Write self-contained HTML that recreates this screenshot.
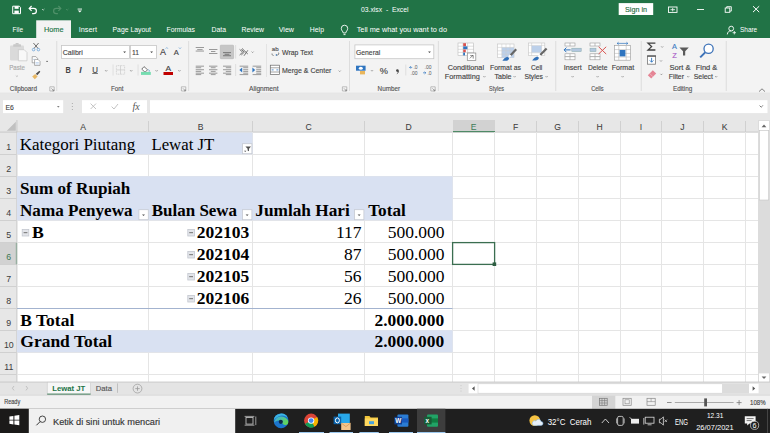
<!DOCTYPE html>
<html><head><meta charset="utf-8">
<style>
*{margin:0;padding:0}
html,body{width:770px;height:433px;overflow:hidden;background:#fff}
svg{position:absolute;left:0;top:0;display:block}
</style></head><body>
<svg width="770" height="433" viewBox="0 0 770 433">
<rect x="0" y="0" width="770" height="38" fill="#217346"/>
<path d="M12.7 6.2h6.6l1.2 1.2v6.3h-7.8z" fill="none" stroke="#fff" stroke-width="1"/>
<rect x="14.6" y="6.2" width="4" height="2.6" fill="#fff"/>
<rect x="14.4" y="10.6" width="4.4" height="3" fill="#fff"/>
<path d="M29.5 8.3h4.2a2.7 2.7 0 0 1 0 5.4h-1.6" fill="none" stroke="#fff" stroke-width="1.2"/>
<path d="M31.6 6l-2.4 2.4 2.4 2.4" fill="none" stroke="#fff" stroke-width="1.2"/>
<path d="M42 9l1.2 1.2L44.4 9" fill="none" stroke="#cfe1d6" stroke-width="0.8"/>
<path d="M60.5 8.3h-4.2a2.7 2.7 0 0 0 0 5.4h1.6" fill="none" stroke="#4f9169" stroke-width="1.2"/>
<path d="M58.4 6l2.4 2.4-2.4 2.4" fill="none" stroke="#4f9169" stroke-width="1.2"/>
<path d="M66 9l1.2 1.2L68.4 9" fill="none" stroke="#4f9169" stroke-width="0.8"/>
<rect x="77.6" y="8.6" width="4.4" height="0.9" fill="#fff"/>
<path d="M77.8 10.6h4l-2 2z" fill="#fff"/>
<text x="361" y="12.3" font-size="7.8" fill="#fff" font-weight="normal" font-family="Liberation Sans" textLength="47.5" lengthAdjust="spacingAndGlyphs">03.xlsx&#160; -&#160; Excel</text>
<rect x="618.7" y="3.1" width="34.5" height="11.9" fill="#fff"/>
<text x="625" y="12" font-size="7.8" fill="#1e6b41" stroke="#1e6b41" stroke-width="0.14" font-weight="normal" font-family="Liberation Sans" textLength="22.0" lengthAdjust="spacingAndGlyphs">Sign in</text>
<rect x="668.5" y="7" width="8.5" height="5.4" fill="none" stroke="#fff" stroke-width="0.9"/>
<path d="M670.5 9.7h4.5M672.7 8v3.4" stroke="#fff" stroke-width="0.8"/>
<rect x="697" y="9" width="7" height="0.9" fill="#fff"/>
<rect x="725.2" y="8" width="4.6" height="4.3" fill="none" stroke="#fff" stroke-width="0.9"/>
<path d="M726.7 8V6.7h4.6v4.4h-1.5" fill="none" stroke="#fff" stroke-width="0.9"/>
<path d="M753 6.2l6.2 5.9M759.2 6.2L753 12.1" stroke="#fff" stroke-width="1"/>
<rect x="36.2" y="20.3" width="34.8" height="18" fill="#f3f3f3"/>
<text x="12.5" y="32.2" font-size="8" fill="#fff" font-weight="normal" font-family="Liberation Sans" textLength="10.5" lengthAdjust="spacingAndGlyphs">File</text>
<text x="78.7" y="32.2" font-size="8" fill="#fff" font-weight="normal" font-family="Liberation Sans" textLength="18.3" lengthAdjust="spacingAndGlyphs">Insert</text>
<text x="112.5" y="32.2" font-size="8" fill="#fff" font-weight="normal" font-family="Liberation Sans" textLength="38.5" lengthAdjust="spacingAndGlyphs">Page Layout</text>
<text x="166.5" y="32.2" font-size="8" fill="#fff" font-weight="normal" font-family="Liberation Sans" textLength="28.5" lengthAdjust="spacingAndGlyphs">Formulas</text>
<text x="211.5" y="32.2" font-size="8" fill="#fff" font-weight="normal" font-family="Liberation Sans" textLength="14.5" lengthAdjust="spacingAndGlyphs">Data</text>
<text x="241.5" y="32.2" font-size="8" fill="#fff" font-weight="normal" font-family="Liberation Sans" textLength="22.5" lengthAdjust="spacingAndGlyphs">Review</text>
<text x="278.7" y="32.2" font-size="8" fill="#fff" font-weight="normal" font-family="Liberation Sans" textLength="15.3" lengthAdjust="spacingAndGlyphs">View</text>
<text x="309.8" y="32.2" font-size="8" fill="#fff" font-weight="normal" font-family="Liberation Sans" textLength="14.2" lengthAdjust="spacingAndGlyphs">Help</text>
<text x="44" y="32.2" font-size="8" fill="#217346" stroke="#217346" stroke-width="0.14" font-weight="normal" font-family="Liberation Sans" textLength="19.5" lengthAdjust="spacingAndGlyphs">Home</text>
<path d="M343.3 33c-.2-1.6-2-2.4-2-4.6a3.2 3.2 0 0 1 6.4 0c0 2.2-1.8 3-2 4.6z" fill="none" stroke="#fff" stroke-width="0.9"/>
<path d="M343.5 34.6h2" stroke="#fff" stroke-width="0.9"/>
<text x="356.7" y="32.2" font-size="8" fill="#fff" font-weight="normal" font-family="Liberation Sans" textLength="90.3" lengthAdjust="spacingAndGlyphs">Tell me what you want to do</text>
<circle cx="731.2" cy="28.6" r="2.4" fill="none" stroke="#fff" stroke-width="0.9"/>
<path d="M727.3 34.4c.3-2.6 1.8-3.6 3.9-3.6" fill="none" stroke="#fff" stroke-width="0.9"/>
<path d="M734.3 31v3.4M732.6 32.7h3.4" stroke="#fff" stroke-width="0.8"/>
<text x="740" y="32.2" font-size="8" fill="#fff" font-weight="normal" font-family="Liberation Sans" textLength="17.2" lengthAdjust="spacingAndGlyphs">Share</text>
<rect x="0" y="38.3" width="770" height="55" fill="#f3f3f3"/>
<rect x="0" y="92.8" width="770" height="0.8" fill="#d8d8d8"/>
<rect x="266.2" y="44" width="0.7" height="33" fill="#dcdcdc"/>
<rect x="56.4" y="41" width="0.8" height="50" fill="#d8d8d8"/>
<rect x="188.3" y="41" width="0.8" height="50" fill="#d8d8d8"/>
<rect x="349" y="41" width="0.8" height="50" fill="#d8d8d8"/>
<rect x="437.9" y="41" width="0.8" height="50" fill="#d8d8d8"/>
<rect x="555.4" y="41" width="0.8" height="50" fill="#d8d8d8"/>
<rect x="640.8" y="41" width="0.8" height="50" fill="#d8d8d8"/>
<rect x="725.8" y="41" width="0.8" height="50" fill="#d8d8d8"/>
<text x="9.8" y="90.5" font-size="6.8" fill="#555" stroke="#555" stroke-width="0.14" font-weight="normal" font-family="Liberation Sans" textLength="27.2" lengthAdjust="spacingAndGlyphs">Clipboard</text>
<text x="111" y="90.5" font-size="6.8" fill="#555" stroke="#555" stroke-width="0.14" font-weight="normal" font-family="Liberation Sans" textLength="12.5" lengthAdjust="spacingAndGlyphs">Font</text>
<text x="249" y="90.5" font-size="6.8" fill="#555" stroke="#555" stroke-width="0.14" font-weight="normal" font-family="Liberation Sans" textLength="29.6" lengthAdjust="spacingAndGlyphs">Alignment</text>
<text x="377.6" y="90.5" font-size="6.8" fill="#555" stroke="#555" stroke-width="0.14" font-weight="normal" font-family="Liberation Sans" textLength="22.4" lengthAdjust="spacingAndGlyphs">Number</text>
<text x="489" y="90.5" font-size="6.8" fill="#555" stroke="#555" stroke-width="0.14" font-weight="normal" font-family="Liberation Sans" textLength="15.0" lengthAdjust="spacingAndGlyphs">Styles</text>
<text x="591.2" y="90.5" font-size="6.8" fill="#555" stroke="#555" stroke-width="0.14" font-weight="normal" font-family="Liberation Sans" textLength="12.4" lengthAdjust="spacingAndGlyphs">Cells</text>
<text x="673" y="90.5" font-size="6.8" fill="#555" stroke="#555" stroke-width="0.14" font-weight="normal" font-family="Liberation Sans" textLength="19.3" lengthAdjust="spacingAndGlyphs">Editing</text>
<path d="M49.8 86.8h4.4v4.2h-4.4z" fill="none" stroke="#999" stroke-width="0.6"/><path d="M51.4 88.4l2.4 2.4M52.4 90.8h1.4v-1.4" fill="none" stroke="#777" stroke-width="0.6"/>
<path d="M181.4 86.8h4.4v4.2h-4.4z" fill="none" stroke="#999" stroke-width="0.6"/><path d="M183.0 88.4l2.4 2.4M184.0 90.8h1.4v-1.4" fill="none" stroke="#777" stroke-width="0.6"/>
<path d="M342.4 86.8h4.4v4.2h-4.4z" fill="none" stroke="#999" stroke-width="0.6"/><path d="M344.0 88.4l2.4 2.4M345.0 90.8h1.4v-1.4" fill="none" stroke="#777" stroke-width="0.6"/>
<path d="M430.8 86.8h4.4v4.2h-4.4z" fill="none" stroke="#999" stroke-width="0.6"/><path d="M432.40000000000003 88.4l2.4 2.4M433.40000000000003 90.8h1.4v-1.4" fill="none" stroke="#777" stroke-width="0.6"/>
<path d="M759 91.6l3-2.8 3 2.8" fill="none" stroke="#666" stroke-width="0.8"/>
<rect x="10" y="45.4" width="14" height="15" rx="0.8" fill="#dadada"/>
<rect x="13.2" y="44.2" width="7.8" height="2.6" rx="0.6" fill="#c8c8c8"/><rect x="15.6" y="43" width="3" height="1.6" fill="#c8c8c8"/>
<path d="M18.4 49.7h5.8l2.8 2.8v8.3h-8.6z" fill="#f8f8f8" stroke="#c6c6c6" stroke-width="0.7"/>
<text x="9.2" y="70.2" font-size="7.5" fill="#a8a8a8" stroke="#a8a8a8" stroke-width="0.14" font-weight="normal" font-family="Liberation Sans" textLength="15.7" lengthAdjust="spacingAndGlyphs">Paste</text>
<path d="M15.8 75.6l1.1 1 1.1-1" fill="none" stroke="#aaa" stroke-width="0.7"/>
<path d="M33.4 43l4.6 5.4M38.6 43L34 48.4" stroke="#505050" stroke-width="0.8"/>
<circle cx="33.6" cy="49.6" r="1.3" fill="none" stroke="#5a9ad6" stroke-width="0.7"/><circle cx="38.4" cy="49.6" r="1.3" fill="none" stroke="#5a9ad6" stroke-width="0.7"/>
<path d="M32.2 56.6h3.6l1.8 1.8v4.4h-5.4z" fill="#fff" stroke="#7a7a7a" stroke-width="0.6"/>
<path d="M34.6 59.4h3.4l2 2v4h-5.4z" fill="#fff" stroke="#7a7a7a" stroke-width="0.6"/>
<path d="M33 59.4h1.6M35.6 62.6h3.2M35.6 64h3.2" stroke="#9bbbe0" stroke-width="0.6"/>
<path d="M46.2 61.4h1.8" stroke="#555" stroke-width="0.8"/>
<path d="M32.2 76.6l3-2.6 2.4 2.4-2.8 2.8z" fill="#e8b865"/>
<path d="M35.8 73.8l3.6-3 .9.9-3 3.6z" fill="#4a4a4a"/>
<rect x="61.5" y="45.5" width="68" height="13" fill="#fff" stroke="#c6c6c6" stroke-width="0.8"/>
<rect x="130.5" y="45.5" width="26" height="13" fill="#fff" stroke="#c6c6c6" stroke-width="0.8"/>
<text x="62.8" y="55.2" font-size="7.8" fill="#444" stroke="#444" stroke-width="0.14" font-weight="normal" font-family="Liberation Sans" textLength="19.9" lengthAdjust="spacingAndGlyphs">Calibri</text>
<text x="132" y="55.2" font-size="7.8" fill="#444" stroke="#444" stroke-width="0.14" font-weight="normal" font-family="Liberation Sans" textLength="7.0" lengthAdjust="spacingAndGlyphs">11</text>
<path d="M123.19999999999999 51.6h2.8l-1.4 1.3z" fill="#444"/>
<path d="M150.2 51.6h2.8l-1.4 1.3z" fill="#444"/>
<text x="159.9" y="55" font-size="9" fill="#444" stroke="#444" stroke-width="0.14" font-weight="normal" font-family="Liberation Sans" textLength="6.0" lengthAdjust="spacingAndGlyphs">A</text>
<path d="M165.8 48.6l1-1 1 1" fill="none" stroke="#4a8fd0" stroke-width="0.7"/>
<text x="173.7" y="55" font-size="7.6" fill="#444" stroke="#444" stroke-width="0.14" font-weight="normal" font-family="Liberation Sans" textLength="5.1" lengthAdjust="spacingAndGlyphs">A</text>
<path d="M179 47.6l1 1 1-1" fill="none" stroke="#4a8fd0" stroke-width="0.7"/>
<text x="65.4" y="72.8" font-size="8.4" fill="#444" font-weight="bold" font-family="Liberation Sans" textLength="5.3" lengthAdjust="spacingAndGlyphs">B</text>
<text x="79.2" y="72.8" font-size="8.6" fill="#444" font-style="italic" font-weight="bold" font-family="Liberation Sans">I</text>
<path d="M82.4 66.6l-2 6.4" stroke="#fff" stroke-width="0"/>
<text x="92.2" y="72.6" font-size="8.2" fill="#444" stroke="#444" stroke-width="0.14" font-weight="normal" font-family="Liberation Sans" textLength="5.7" lengthAdjust="spacingAndGlyphs">U</text>
<rect x="92.2" y="73" width="5.7" height="0.7" fill="#444"/>
<path d="M105.10000000000001 70.2l1.1 1.1 1.1-1.1" fill="none" stroke="#777" stroke-width="0.7"/>
<path d="M130.1 70.2l1.1 1.1 1.1-1.1" fill="none" stroke="#777" stroke-width="0.7"/>
<path d="M155.5 70.2l1.1 1.1 1.1-1.1" fill="none" stroke="#777" stroke-width="0.7"/>
<path d="M178.3 70.2l1.1 1.1 1.1-1.1" fill="none" stroke="#777" stroke-width="0.7"/>
<rect x="112.7" y="64.5" width="0.7" height="11" fill="#d6d6d6"/>
<rect x="137.7" y="64.5" width="0.7" height="11" fill="#d6d6d6"/>
<rect x="116.4" y="65.6" width="8.2" height="8.6" fill="none" stroke="#c8c8c8" stroke-width="0.7" stroke-dasharray="1 0.6"/>
<path d="M120.5 65.6v8.6M116.4 69.9h8.2" stroke="#c8c8c8" stroke-width="0.7"/>
<path d="M144 66.6l3.6 3.2-2.6 2.4-3.2-3z" fill="#fff" stroke="#555" stroke-width="0.8"/>
<path d="M148.6 69.6c.8 1 .9 1.6.5 2" fill="none" stroke="#4a8fd0" stroke-width="0.9"/>
<rect x="141" y="71.9" width="9.8" height="3" fill="#75dcb0"/>
<text x="165.4" y="71.2" font-size="7.6" fill="#444" stroke="#444" stroke-width="0.14" font-weight="normal" font-family="Liberation Sans" textLength="5.6" lengthAdjust="spacingAndGlyphs">A</text>
<rect x="163.5" y="72" width="9.5" height="3" fill="#c00000"/>
<rect x="195.7" y="47" width="8.300000000000011" height="0.9" fill="#8f8f8f"/>
<rect x="197.2" y="49.2" width="5.400000000000006" height="0.9" fill="#8f8f8f"/>
<rect x="195.7" y="50.6" width="8.300000000000011" height="0.9" fill="#8f8f8f"/>
<rect x="209" y="49" width="8.400000000000006" height="0.9" fill="#8f8f8f"/>
<rect x="211" y="51.1" width="4.400000000000006" height="0.9" fill="#8f8f8f"/>
<rect x="209" y="53" width="8.400000000000006" height="0.9" fill="#8f8f8f"/>
<rect x="220.3" y="45.2" width="13.3" height="13.5" rx="0.6" fill="#c6c6c6" stroke="#b4b4b4" stroke-width="0.6"/>
<rect x="223" y="52.2" width="8" height="0.9" fill="#6e6e6e"/>
<rect x="224.6" y="53.8" width="4.800000000000011" height="0.9" fill="#6e6e6e"/>
<rect x="223" y="55.3" width="8" height="0.9" fill="#6e6e6e"/>
<rect x="195.7" y="65.7" width="8.300000000000011" height="0.9" fill="#8f8f8f"/>
<rect x="209" y="65.7" width="8.400000000000006" height="0.9" fill="#8f8f8f"/>
<rect x="223" y="65.7" width="8.199999999999989" height="0.9" fill="#8f8f8f"/>
<rect x="239.6" y="65.7" width="8.599999999999994" height="0.9" fill="#8f8f8f"/>
<rect x="252.6" y="65.7" width="8.599999999999994" height="0.9" fill="#8f8f8f"/>
<rect x="195.7" y="67.3" width="5.5" height="0.9" fill="#8f8f8f"/>
<rect x="210.8" y="67.3" width="4.799999999999983" height="0.9" fill="#8f8f8f"/>
<rect x="225.8" y="67.3" width="5.399999999999977" height="0.9" fill="#8f8f8f"/>
<rect x="243.2" y="67.3" width="5.0" height="0.9" fill="#8f8f8f"/>
<rect x="256.2" y="67.3" width="5.0" height="0.9" fill="#8f8f8f"/>
<rect x="195.7" y="69.3" width="8.300000000000011" height="0.9" fill="#8f8f8f"/>
<rect x="209" y="69.3" width="8.400000000000006" height="0.9" fill="#8f8f8f"/>
<rect x="223" y="69.3" width="8.199999999999989" height="0.9" fill="#8f8f8f"/>
<rect x="243.2" y="69.3" width="5.0" height="0.9" fill="#8f8f8f"/>
<rect x="256.2" y="69.3" width="5.0" height="0.9" fill="#8f8f8f"/>
<rect x="195.7" y="70.9" width="5.5" height="0.9" fill="#8f8f8f"/>
<rect x="210.8" y="70.9" width="4.799999999999983" height="0.9" fill="#8f8f8f"/>
<rect x="225.8" y="70.9" width="5.399999999999977" height="0.9" fill="#8f8f8f"/>
<rect x="243.2" y="70.9" width="5.0" height="0.9" fill="#8f8f8f"/>
<rect x="256.2" y="70.9" width="5.0" height="0.9" fill="#8f8f8f"/>
<rect x="195.7" y="72.7" width="8.300000000000011" height="0.9" fill="#8f8f8f"/>
<rect x="209" y="72.7" width="8.400000000000006" height="0.9" fill="#8f8f8f"/>
<rect x="223" y="72.7" width="8.199999999999989" height="0.9" fill="#8f8f8f"/>
<rect x="243.2" y="72.7" width="5.0" height="0.9" fill="#8f8f8f"/>
<rect x="256.2" y="72.7" width="5.0" height="0.9" fill="#8f8f8f"/>
<rect x="195.7" y="74.2" width="5.5" height="0.9" fill="#8f8f8f"/>
<rect x="210.8" y="74.2" width="4.799999999999983" height="0.9" fill="#8f8f8f"/>
<rect x="225.8" y="74.2" width="5.399999999999977" height="0.9" fill="#8f8f8f"/>
<rect x="239.6" y="74.2" width="8.599999999999994" height="0.9" fill="#8f8f8f"/>
<rect x="252.6" y="74.2" width="8.599999999999994" height="0.9" fill="#8f8f8f"/>
<path d="M239.6 49.4l3 2.8-3 2.8M241.3 49.4l3 2.8-3 2.8M242 48.4l5.8 5.6M247.8 50.3l-3.8 5.5" fill="none" stroke="#555" stroke-width="0.8"/>
<path d="M251.6 51.6l1 1 1-1" fill="none" stroke="#777" stroke-width="0.7"/>
<rect x="235.4" y="45" width="0.7" height="13.6" fill="#d6d6d6"/>
<rect x="235.4" y="64" width="0.7" height="12" fill="#d6d6d6"/>
<path d="M242.2 67.4l-2.8 2.5 2.8 2.5z" fill="#2f75c0"/><path d="M252.4 67.4l2.8 2.5-2.8 2.5z" fill="#2f75c0"/>
<text x="271.8" y="51" font-size="5" fill="#555" stroke="#555" stroke-width="0.14" font-weight="normal" font-family="Liberation Sans" textLength="6.8" lengthAdjust="spacingAndGlyphs">ab</text>
<path d="M272 53.5c0 1.5.6 2 1.6 2M278 52.6c.6 0 .8.6.8 1.1s-.4 1.3-1.2 1.3h-1.6" fill="none" stroke="#555" stroke-width="0.7"/><path d="M276.8 54l-1 1 1 1" fill="none" stroke="#2f75c0" stroke-width="0.7"/>
<text x="282" y="54.8" font-size="7.6" fill="#444" stroke="#444" stroke-width="0.14" font-weight="normal" font-family="Liberation Sans" textLength="30.9" lengthAdjust="spacingAndGlyphs">Wrap Text</text>
<rect x="270.3" y="65.2" width="9.2" height="9.4" fill="#fff" stroke="#666" stroke-width="0.7"/>
<path d="M270.3 67.8h9.2M270.3 72h9.2" stroke="#666" stroke-width="0.6"/><path d="M271.6 69.9h2M276.4 69.9h2" stroke="#2f75c0" stroke-width="0.8"/>
<text x="282" y="73.4" font-size="7.6" fill="#444" stroke="#444" stroke-width="0.14" font-weight="normal" font-family="Liberation Sans" textLength="49.4" lengthAdjust="spacingAndGlyphs">Merge &amp; Center</text>
<path d="M338.7 70.6l1 1 1-1" fill="none" stroke="#777" stroke-width="0.7"/>
<rect x="354.9" y="44.9" width="78.9" height="13.8" fill="#fff" stroke="#c6c6c6" stroke-width="0.8"/>
<text x="356" y="55.2" font-size="7.8" fill="#444" stroke="#444" stroke-width="0.14" font-weight="normal" font-family="Liberation Sans" textLength="24.2" lengthAdjust="spacingAndGlyphs">General</text>
<path d="M428.1 51.6h2.8l-1.4 1.3z" fill="#444"/>
<rect x="356" y="65.7" width="9.6" height="5" fill="#2f75c0"/><ellipse cx="360.8" cy="68.2" rx="2" ry="1.5" fill="#fff"/>
<rect x="360" y="71" width="5" height="3.4" fill="#e9b65c"/>
<path d="M371 70.2l1 1 1-1" fill="none" stroke="#777" stroke-width="0.7"/>
<text x="379.8" y="74" font-size="9" fill="#444" stroke="#444" stroke-width="0.14" font-weight="normal" font-family="Liberation Sans" textLength="8.2" lengthAdjust="spacingAndGlyphs">%</text>
<circle cx="397.4" cy="70.6" r="1.3" fill="#444"/><path d="M398.5 70.8c0 1.4-.6 2.4-1.6 3" fill="none" stroke="#444" stroke-width="0.9"/>
<rect x="405.5" y="64.5" width="0.7" height="11" fill="#d6d6d6"/>
<text x="413.4" y="69.4" font-size="5" fill="#555" font-family="Liberation Sans">.0</text>
<text x="410.6" y="74.8" font-size="5" fill="#555" font-family="Liberation Sans">.00</text>
<path d="M409.6 67.4h2.6M410.8 66.2l-1.2 1.2 1.2 1.2" fill="none" stroke="#2f75c0" stroke-width="0.7"/>
<text x="424.6" y="69.4" font-size="5" fill="#555" font-family="Liberation Sans">.00</text>
<text x="427.4" y="74.8" font-size="5" fill="#555" font-family="Liberation Sans">.0</text>
<path d="M423 72.8h2.8M424.6 71.6l1.2 1.2-1.2 1.2" fill="none" stroke="#2f75c0" stroke-width="0.7"/>
<rect x="458" y="43" width="15.6" height="12.6" fill="#fff" stroke="#bcbcbc" stroke-width="0.6"/>
<path d="M458 46.2h15.6M458 49.3h15.6M458 52.4h15.6M463 43v12.6M467.6 43v12.6" stroke="#bcbcbc" stroke-width="0.5"/>
<rect x="463.2" y="43.2" width="2.8" height="3" fill="#d9534f"/><rect x="463.2" y="46.4" width="4.2" height="2.8" fill="#2f75c0"/><rect x="463.2" y="49.5" width="2.6" height="2.8" fill="#d9534f"/><rect x="463.2" y="52.6" width="1.8" height="2.8" fill="#2f75c0"/>
<rect x="467.3" y="53" width="8.5" height="7.4" fill="#fff" stroke="#888" stroke-width="0.7"/>
<path d="M469.8 58.4l3.4-3.4M470.2 55.6h3v3" fill="none" stroke="#444" stroke-width="0.6"/>
<text x="447.8" y="69.7" font-size="7.5" fill="#444" stroke="#444" stroke-width="0.14" font-weight="normal" font-family="Liberation Sans" textLength="36.2" lengthAdjust="spacingAndGlyphs">Conditional</text>
<text x="444.8" y="79.1" font-size="7.5" fill="#444" stroke="#444" stroke-width="0.14" font-weight="normal" font-family="Liberation Sans" textLength="35.0" lengthAdjust="spacingAndGlyphs">Formatting</text>
<rect x="497.4" y="44" width="16.6" height="13.6" fill="#fff" stroke="#c4c4c4" stroke-width="0.6"/>
<rect x="501.8" y="47.4" width="12.2" height="10.2" fill="#bcd0ea"/>
<path d="M497.4 47.4h16.6M497.4 50.8h16.6M497.4 54.2h16.6M501.8 44v13.6M506 44v13.6M510 44v13.6" stroke="#c8c8c8" stroke-width="0.5"/>
<path d="M516.2 49.2l-5.6 6" stroke="#666" stroke-width="2.2"/><path d="M510.6 55.2l-1.6 1.8" stroke="#fff" stroke-width="2"/>
<path d="M502.4 60.8c1.2-1.8 2.6-3.4 5-4l1.8 1.4c-.6 1.8-1.8 2.6-3.2 2.6z" fill="#2f6fb8"/>
<text x="490" y="69.7" font-size="7.5" fill="#444" stroke="#444" stroke-width="0.14" font-weight="normal" font-family="Liberation Sans" textLength="31.0" lengthAdjust="spacingAndGlyphs">Format as</text>
<text x="494.5" y="79.1" font-size="7.5" fill="#444" stroke="#444" stroke-width="0.14" font-weight="normal" font-family="Liberation Sans" textLength="17.0" lengthAdjust="spacingAndGlyphs">Table</text>
<rect x="528.4" y="43" width="16.4" height="12.6" fill="#fff" stroke="#c4c4c4" stroke-width="0.6"/>
<rect x="531.6" y="45.6" width="10" height="7" fill="#bcd0ea"/>
<path d="M528.4 45.4h16.4M528.4 52.8h16.4M531.6 43v12.6M541.6 43v12.6" stroke="#c8c8c8" stroke-width="0.5"/>
<path d="M546.6 48.4l-6.4 6.6" stroke="#666" stroke-width="2.2"/><path d="M540.2 55l-1.6 1.8" stroke="#fff" stroke-width="2"/>
<path d="M532.2 60.4c1.2-1.8 2.6-3.4 5-4l1.8 1.4c-.6 1.8-1.8 2.6-3.2 2.6z" fill="#2f6fb8"/>
<text x="531" y="69.7" font-size="7.5" fill="#444" stroke="#444" stroke-width="0.14" font-weight="normal" font-family="Liberation Sans" textLength="11.3" lengthAdjust="spacingAndGlyphs">Cell</text>
<text x="524.4" y="79.1" font-size="7.5" fill="#444" stroke="#444" stroke-width="0.14" font-weight="normal" font-family="Liberation Sans" textLength="18.6" lengthAdjust="spacingAndGlyphs">Styles</text>
<path d="M483.4 76.2l1 1 1-1" fill="none" stroke="#777" stroke-width="0.7"/>
<path d="M513.6 76.2l1 1 1-1" fill="none" stroke="#777" stroke-width="0.7"/>
<path d="M545.6 76.2l1 1 1-1" fill="none" stroke="#777" stroke-width="0.7"/>
<path d="M571.6 76.2l1 1 1-1" fill="none" stroke="#777" stroke-width="0.7"/>
<path d="M596.6 76.2l1 1 1-1" fill="none" stroke="#777" stroke-width="0.7"/>
<path d="M621.6 76.2l1 1 1-1" fill="none" stroke="#777" stroke-width="0.7"/>
<path d="M687.2 76.2l1 1 1-1" fill="none" stroke="#777" stroke-width="0.7"/>
<path d="M715.2 76.2l1 1 1-1" fill="none" stroke="#777" stroke-width="0.7"/>
<rect x="565" y="43" width="10" height="3" fill="#fff" stroke="#999" stroke-width="0.6"/><path d="M570 43v3" stroke="#999" stroke-width="0.6"/>
<rect x="565" y="53.8" width="10" height="3" fill="#fff" stroke="#999" stroke-width="0.6"/><path d="M570 53.8v3" stroke="#999" stroke-width="0.6"/>
<rect x="565" y="56.8" width="10" height="3" fill="#fff" stroke="#999" stroke-width="0.6"/><path d="M570 56.8v3" stroke="#999" stroke-width="0.6"/>
<rect x="571.8" y="48.2" width="9.4" height="3.4" fill="#b3c7e0" stroke="#8aa" stroke-width="0.5"/>
<path d="M564 49.9h6.6M566.4 47.6l-2.3 2.3 2.3 2.3" fill="none" stroke="#2f75c0" stroke-width="1"/>
<text x="563.7" y="69.7" font-size="7.5" fill="#444" stroke="#444" stroke-width="0.14" font-weight="normal" font-family="Liberation Sans" textLength="18.1" lengthAdjust="spacingAndGlyphs">Insert</text>
<rect x="590" y="43" width="10" height="3" fill="#fff" stroke="#999" stroke-width="0.6"/><path d="M595 43v3" stroke="#999" stroke-width="0.6"/>
<rect x="590" y="53.8" width="10" height="3" fill="#fff" stroke="#999" stroke-width="0.6"/><path d="M595 53.8v3" stroke="#999" stroke-width="0.6"/>
<rect x="590" y="56.8" width="10" height="3" fill="#fff" stroke="#999" stroke-width="0.6"/><path d="M595 56.8v3" stroke="#999" stroke-width="0.6"/>
<rect x="590" y="48.2" width="6" height="3.4" fill="#b3c7e0" stroke="#8aa" stroke-width="0.5"/>
<path d="M598.6 46.8l7.6 7.2M606.2 46.8l-7.6 7.2" stroke="#d9534f" stroke-width="1"/>
<text x="588" y="69.7" font-size="7.5" fill="#444" stroke="#444" stroke-width="0.14" font-weight="normal" font-family="Liberation Sans" textLength="19.4" lengthAdjust="spacingAndGlyphs">Delete</text>
<rect x="614.4" y="45.6" width="16.2" height="14.6" fill="#fff" stroke="#999" stroke-width="0.6"/>
<path d="M614.4 49.6h16.2M614.4 53.4h16.2M614.4 57h16.2M618.8 45.6v14.6M626.2 45.6v14.6" stroke="#aaa" stroke-width="0.5"/>
<rect x="619.6" y="50" width="5.8" height="6.4" fill="#2f75c0"/>
<path d="M617 43.4h11M618.6 42.2l-1.4 1.2 1.4 1.2M626.4 42.2l1.4 1.2-1.4 1.2" fill="none" stroke="#2f75c0" stroke-width="0.7"/>
<text x="611.7" y="69.7" font-size="7.5" fill="#444" stroke="#444" stroke-width="0.14" font-weight="normal" font-family="Liberation Sans" textLength="22.5" lengthAdjust="spacingAndGlyphs">Format</text>
<path d="M655.4 43.2h-7.4l3.6 3.4-3.6 3.4h7.4" fill="none" stroke="#404040" stroke-width="1.3"/>
<path d="M661.2 46.4l1 1 1-1" fill="none" stroke="#777" stroke-width="0.7"/>
<rect x="647.6" y="56" width="8" height="8.2" fill="#fff" stroke="#777" stroke-width="0.8"/><rect x="647.2" y="55.4" width="8.8" height="1.3" fill="#555"/>
<path d="M651.6 57.8v4.4M649.8 60.4l1.8 1.8 1.8-1.8" fill="none" stroke="#2f75c0" stroke-width="0.9"/>
<path d="M660 60.4l1 1 1-1" fill="none" stroke="#777" stroke-width="0.7"/>
<path d="M647.8 75.2l5-5 3.4 3.4-5 5z" fill="#e58595"/><path d="M649.6 73.4l3.4 3.4" stroke="#f4c0c8" stroke-width="0.7"/>
<path d="M660.4 73.8l1 1 1-1" fill="none" stroke="#777" stroke-width="0.7"/>
<text x="671.9" y="49.2" font-size="7.8" fill="#3e7cc4" stroke="#3e7cc4" stroke-width="0.14" font-weight="normal" font-family="Liberation Sans" textLength="4.9" lengthAdjust="spacingAndGlyphs">A</text>
<text x="672.2" y="57.8" font-size="7.8" fill="#a95cc8" stroke="#a95cc8" stroke-width="0.14" font-weight="normal" font-family="Liberation Sans" textLength="4.6" lengthAdjust="spacingAndGlyphs">Z</text>
<path d="M679.4 47.4h9.4l-3.6 3.8v4.4h-2.2v-4.4z" fill="#5a5a5a"/>
<text x="669.5" y="69.7" font-size="7.5" fill="#444" stroke="#444" stroke-width="0.14" font-weight="normal" font-family="Liberation Sans" textLength="21.1" lengthAdjust="spacingAndGlyphs">Sort &amp;</text>
<text x="668.7" y="79.1" font-size="7.5" fill="#444" stroke="#444" stroke-width="0.14" font-weight="normal" font-family="Liberation Sans" textLength="15.3" lengthAdjust="spacingAndGlyphs">Filter</text>
<circle cx="708.6" cy="48.8" r="4.6" fill="#fff" stroke="#3d72b8" stroke-width="1.3"/>
<path d="M705.2 52.4l-5 5" stroke="#3d72b8" stroke-width="2"/>
<text x="695.7" y="69.7" font-size="7.5" fill="#444" stroke="#444" stroke-width="0.14" font-weight="normal" font-family="Liberation Sans" textLength="21.6" lengthAdjust="spacingAndGlyphs">Find &amp;</text>
<text x="693.7" y="79.1" font-size="7.5" fill="#444" stroke="#444" stroke-width="0.14" font-weight="normal" font-family="Liberation Sans" textLength="19.3" lengthAdjust="spacingAndGlyphs">Select</text>
<rect x="0" y="93.6" width="770" height="26.4" fill="#e7e7e7"/>
<rect x="3" y="100.2" width="60.2" height="13.1" fill="#fff"/>
<text x="5.5" y="109.6" font-size="7.6" fill="#444" stroke="#444" stroke-width="0.14" font-weight="normal" font-family="Liberation Sans" textLength="8.3" lengthAdjust="spacingAndGlyphs">E6</text>
<path d="M57 106.2h2.6l-1.3 1.2z" fill="#555"/>
<circle cx="72.3" cy="103.4" r="0.5" fill="#999"/><circle cx="72.3" cy="106.4" r="0.5" fill="#999"/><circle cx="72.3" cy="109.4" r="0.5" fill="#999"/>
<rect x="82" y="100.2" width="65" height="13.1" fill="#fff"/>
<path d="M90.6 103.6l5.4 5.4M96 103.6l-5.4 5.4" stroke="#b4b4b4" stroke-width="0.8"/>
<path d="M111.6 106.6l2.4 2.4 4-5" fill="none" stroke="#b4b4b4" stroke-width="0.8"/>
<text x="132.6" y="110.2" font-size="10" font-style="italic" font-family="Liberation Serif" fill="#555">fx</text>
<rect x="150" y="100.2" width="617.5" height="13.1" fill="#fff"/>
<path d="M759.6 105.6l1.6 1.6 1.6-1.6" fill="none" stroke="#555" stroke-width="0.8"/>
<rect x="0" y="113.3" width="770" height="18.7" fill="#e7e7e7"/>
<rect x="17" y="132" width="741" height="250" fill="#fff"/>
<rect x="0" y="132" width="17" height="250" fill="#e7e7e7"/>
<rect x="453" y="120" width="42" height="11.6" fill="#d2d2d2"/>
<rect x="453" y="131" width="42" height="1.1" fill="#4f8a66"/>
<rect x="0" y="242.6" width="16.4" height="22" fill="#d2d2d2"/>
<rect x="15.9" y="242.6" width="1.2" height="22" fill="#4f8a66"/>
<rect x="148" y="121" width="1" height="11" fill="#d0d0d0"/>
<rect x="252" y="121" width="1" height="11" fill="#d0d0d0"/>
<rect x="364" y="121" width="1" height="11" fill="#d0d0d0"/>
<rect x="536" y="121" width="1" height="11" fill="#d0d0d0"/>
<rect x="578" y="121" width="1" height="11" fill="#d0d0d0"/>
<rect x="620" y="121" width="1" height="11" fill="#d0d0d0"/>
<rect x="661" y="121" width="1" height="11" fill="#d0d0d0"/>
<rect x="703" y="121" width="1" height="11" fill="#d0d0d0"/>
<rect x="745" y="121" width="1" height="11" fill="#d0d0d0"/>
<rect x="0" y="131.6" width="758" height="1" fill="#c8c8c8"/>
<rect x="453" y="131" width="42" height="1.1" fill="#4f8a66"/>
<path d="M6.8 130.7h9V121.7z" fill="#c0c0c0"/>
<rect x="16.4" y="120" width="1" height="262" fill="#c8c8c8"/>
<rect x="148" y="132" width="1" height="250" fill="#e5e5e5"/>
<rect x="252" y="132" width="1" height="250" fill="#e5e5e5"/>
<rect x="364" y="132" width="1" height="250" fill="#e5e5e5"/>
<rect x="452" y="132" width="1" height="250" fill="#e5e5e5"/>
<rect x="494" y="132" width="1" height="250" fill="#e5e5e5"/>
<rect x="536" y="132" width="1" height="250" fill="#e5e5e5"/>
<rect x="578" y="132" width="1" height="250" fill="#e5e5e5"/>
<rect x="620" y="132" width="1" height="250" fill="#e5e5e5"/>
<rect x="661" y="132" width="1" height="250" fill="#e5e5e5"/>
<rect x="703" y="132" width="1" height="250" fill="#e5e5e5"/>
<rect x="745" y="132" width="1" height="250" fill="#e5e5e5"/>
<rect x="17" y="154" width="741" height="1" fill="#e5e5e5"/>
<rect x="17" y="176" width="741" height="1" fill="#e5e5e5"/>
<rect x="17" y="198" width="741" height="1" fill="#e5e5e5"/>
<rect x="17" y="220" width="741" height="1" fill="#e5e5e5"/>
<rect x="17" y="242" width="741" height="1" fill="#e5e5e5"/>
<rect x="17" y="264" width="741" height="1" fill="#e5e5e5"/>
<rect x="17" y="286" width="741" height="1" fill="#e5e5e5"/>
<rect x="17" y="308" width="741" height="1" fill="#e5e5e5"/>
<rect x="17" y="330" width="741" height="1" fill="#e5e5e5"/>
<rect x="17" y="352" width="741" height="1" fill="#e5e5e5"/>
<rect x="17" y="374" width="741" height="1" fill="#e5e5e5"/>
<rect x="0" y="154" width="16.4" height="1" fill="#d0d0d0"/>
<rect x="0" y="176" width="16.4" height="1" fill="#d0d0d0"/>
<rect x="0" y="198" width="16.4" height="1" fill="#d0d0d0"/>
<rect x="0" y="220" width="16.4" height="1" fill="#d0d0d0"/>
<rect x="0" y="242" width="16.4" height="1" fill="#d0d0d0"/>
<rect x="0" y="264" width="16.4" height="1" fill="#d0d0d0"/>
<rect x="0" y="286" width="16.4" height="1" fill="#d0d0d0"/>
<rect x="0" y="308" width="16.4" height="1" fill="#d0d0d0"/>
<rect x="0" y="330" width="16.4" height="1" fill="#d0d0d0"/>
<rect x="0" y="352" width="16.4" height="1" fill="#d0d0d0"/>
<rect x="0" y="374" width="16.4" height="1" fill="#d0d0d0"/>
<rect x="17" y="132.5" width="235.5" height="21.8" fill="#d9e1f2"/>
<rect x="17" y="176.3" width="435.6" height="44" fill="#d9e1f2"/>
<rect x="17" y="330.3" width="435.6" height="22" fill="#d9e1f2"/>
<rect x="17" y="308" width="435.6" height="1" fill="#a3b3cf"/>
<text x="83.0" y="129.6" font-size="8.6" fill="#3c3c3c" font-family="Liberation Sans" text-anchor="middle" stroke="#3c3c3c" stroke-width="0.05">A</text>
<text x="200.5" y="129.6" font-size="8.6" fill="#3c3c3c" font-family="Liberation Sans" text-anchor="middle" stroke="#3c3c3c" stroke-width="0.05">B</text>
<text x="308.5" y="129.6" font-size="8.6" fill="#3c3c3c" font-family="Liberation Sans" text-anchor="middle" stroke="#3c3c3c" stroke-width="0.05">C</text>
<text x="408.5" y="129.6" font-size="8.6" fill="#3c3c3c" font-family="Liberation Sans" text-anchor="middle" stroke="#3c3c3c" stroke-width="0.05">D</text>
<text x="473.5" y="129.6" font-size="8.6" fill="#3e7a57" font-family="Liberation Sans" text-anchor="middle" stroke="#3e7a57" stroke-width="0.05">E</text>
<text x="515.5" y="129.6" font-size="8.6" fill="#3c3c3c" font-family="Liberation Sans" text-anchor="middle" stroke="#3c3c3c" stroke-width="0.05">F</text>
<text x="557.5" y="129.6" font-size="8.6" fill="#3c3c3c" font-family="Liberation Sans" text-anchor="middle" stroke="#3c3c3c" stroke-width="0.05">G</text>
<text x="599.5" y="129.6" font-size="8.6" fill="#3c3c3c" font-family="Liberation Sans" text-anchor="middle" stroke="#3c3c3c" stroke-width="0.05">H</text>
<text x="641.0" y="129.6" font-size="8.6" fill="#3c3c3c" font-family="Liberation Sans" text-anchor="middle" stroke="#3c3c3c" stroke-width="0.05">I</text>
<text x="682.5" y="129.6" font-size="8.6" fill="#3c3c3c" font-family="Liberation Sans" text-anchor="middle" stroke="#3c3c3c" stroke-width="0.05">J</text>
<text x="724.5" y="129.6" font-size="8.6" fill="#3c3c3c" font-family="Liberation Sans" text-anchor="middle" stroke="#3c3c3c" stroke-width="0.05">K</text>
<text x="8.8" y="150" font-size="8.8" fill="#404040" font-family="Liberation Sans" text-anchor="middle" stroke="#404040" stroke-width="0.04">1</text>
<text x="8.8" y="172" font-size="8.8" fill="#404040" font-family="Liberation Sans" text-anchor="middle" stroke="#404040" stroke-width="0.04">2</text>
<text x="8.8" y="194" font-size="8.8" fill="#404040" font-family="Liberation Sans" text-anchor="middle" stroke="#404040" stroke-width="0.04">3</text>
<text x="8.8" y="216" font-size="8.8" fill="#404040" font-family="Liberation Sans" text-anchor="middle" stroke="#404040" stroke-width="0.04">4</text>
<text x="8.8" y="238" font-size="8.8" fill="#404040" font-family="Liberation Sans" text-anchor="middle" stroke="#404040" stroke-width="0.04">5</text>
<text x="8.8" y="260" font-size="8.8" fill="#3e7a57" font-family="Liberation Sans" text-anchor="middle" stroke="#3e7a57" stroke-width="0.04">6</text>
<text x="8.8" y="282" font-size="8.8" fill="#404040" font-family="Liberation Sans" text-anchor="middle" stroke="#404040" stroke-width="0.04">7</text>
<text x="8.8" y="304" font-size="8.8" fill="#404040" font-family="Liberation Sans" text-anchor="middle" stroke="#404040" stroke-width="0.04">8</text>
<text x="8.8" y="326" font-size="8.8" fill="#404040" font-family="Liberation Sans" text-anchor="middle" stroke="#404040" stroke-width="0.04">9</text>
<text x="8.8" y="348" font-size="8.8" fill="#404040" font-family="Liberation Sans" text-anchor="middle" stroke="#404040" stroke-width="0.04">10</text>
<text x="8.8" y="370" font-size="8.8" fill="#404040" font-family="Liberation Sans" text-anchor="middle" stroke="#404040" stroke-width="0.04">11</text>
<text x="19.8" y="149.6" textLength="115.5" lengthAdjust="spacingAndGlyphs" font-size="17.7" font-weight="normal" fill="#000" font-family="Liberation Serif" text-anchor="start">Kategori Piutang</text>
<text x="151.4" y="149.6" textLength="63" lengthAdjust="spacingAndGlyphs" font-size="17.7" font-weight="normal" fill="#000" font-family="Liberation Serif" text-anchor="start">Lewat JT</text>
<rect x="242.5" y="143.7" width="9.4" height="10" fill="#fff" stroke="#c6cad2" stroke-width="0.8"/><path d="M245.4 146.6h5.6l-2 2.2v2.4l-1.4-.6v-1.8z" fill="#505050"/><path d="M244 150.79999999999998h2.4l-1.2 1.2z" fill="#505050"/>
<text x="20" y="193.6" textLength="110.2" lengthAdjust="spacingAndGlyphs" font-size="17.7" font-weight="bold" fill="#000" font-family="Liberation Serif" text-anchor="start">Sum of Rupiah</text>
<text x="20" y="215.6" textLength="112.6" lengthAdjust="spacingAndGlyphs" font-size="17.7" font-weight="bold" fill="#000" font-family="Liberation Serif" text-anchor="start">Nama Penyewa</text>
<rect x="138.9" y="209.7" width="9.4" height="10" fill="#fff" stroke="#c6cad2" stroke-width="0.8"/><path d="M142.0 214.6h3l-1.5 1.4z" fill="#505050"/>
<text x="151.8" y="215.6" textLength="85.3" lengthAdjust="spacingAndGlyphs" font-size="17.7" font-weight="bold" fill="#000" font-family="Liberation Serif" text-anchor="start">Bulan Sewa</text>
<rect x="242.5" y="209.7" width="9.4" height="10" fill="#fff" stroke="#c6cad2" stroke-width="0.8"/><path d="M245.6 214.6h3l-1.5 1.4z" fill="#505050"/>
<text x="255.3" y="215.6" textLength="94.5" lengthAdjust="spacingAndGlyphs" font-size="17.7" font-weight="bold" fill="#000" font-family="Liberation Serif" text-anchor="start">Jumlah Hari</text>
<rect x="354.5" y="209.7" width="9.4" height="10" fill="#fff" stroke="#c6cad2" stroke-width="0.8"/><path d="M357.6 214.6h3l-1.5 1.4z" fill="#505050"/>
<text x="368.2" y="215.6" textLength="37.6" lengthAdjust="spacingAndGlyphs" font-size="17.7" font-weight="bold" fill="#000" font-family="Liberation Serif" text-anchor="start">Total</text>
<rect x="22.2" y="229.4" width="6.6" height="6.6" fill="#e3e5ea" stroke="#c3c7cf" stroke-width="0.8"/><rect x="23.6" y="232.1" width="3.8" height="1.1" fill="#7a7a7a"/>
<text x="32" y="237.8" font-size="17.7" font-weight="bold" fill="#000" font-family="Liberation Serif" text-anchor="start">B</text>
<rect x="187.8" y="229.4" width="6.6" height="6.6" fill="#e3e5ea" stroke="#c3c7cf" stroke-width="0.8"/><rect x="189.20000000000002" y="232.1" width="3.8" height="1.1" fill="#7a7a7a"/>
<text x="249.2" y="238" font-size="17.5" font-weight="bold" fill="#000" font-family="Liberation Serif" text-anchor="end">202103</text>
<text x="361.6" y="238" font-size="17.5" font-weight="normal" fill="#000" font-family="Liberation Serif" text-anchor="end">117</text>
<text x="444.6" y="238" font-size="17.5" font-weight="normal" fill="#000" font-family="Liberation Serif" text-anchor="end">500.000</text>
<rect x="187.8" y="251.4" width="6.6" height="6.6" fill="#e3e5ea" stroke="#c3c7cf" stroke-width="0.8"/><rect x="189.20000000000002" y="254.1" width="3.8" height="1.1" fill="#7a7a7a"/>
<text x="249.2" y="260" font-size="17.5" font-weight="bold" fill="#000" font-family="Liberation Serif" text-anchor="end">202104</text>
<text x="361.6" y="260" font-size="17.5" font-weight="normal" fill="#000" font-family="Liberation Serif" text-anchor="end">87</text>
<text x="444.6" y="260" font-size="17.5" font-weight="normal" fill="#000" font-family="Liberation Serif" text-anchor="end">500.000</text>
<rect x="187.8" y="273.4" width="6.6" height="6.6" fill="#e3e5ea" stroke="#c3c7cf" stroke-width="0.8"/><rect x="189.20000000000002" y="276.1" width="3.8" height="1.1" fill="#7a7a7a"/>
<text x="249.2" y="282" font-size="17.5" font-weight="bold" fill="#000" font-family="Liberation Serif" text-anchor="end">202105</text>
<text x="361.6" y="282" font-size="17.5" font-weight="normal" fill="#000" font-family="Liberation Serif" text-anchor="end">56</text>
<text x="444.6" y="282" font-size="17.5" font-weight="normal" fill="#000" font-family="Liberation Serif" text-anchor="end">500.000</text>
<rect x="187.8" y="295.4" width="6.6" height="6.6" fill="#e3e5ea" stroke="#c3c7cf" stroke-width="0.8"/><rect x="189.20000000000002" y="298.1" width="3.8" height="1.1" fill="#7a7a7a"/>
<text x="249.2" y="304" font-size="17.5" font-weight="bold" fill="#000" font-family="Liberation Serif" text-anchor="end">202106</text>
<text x="361.6" y="304" font-size="17.5" font-weight="normal" fill="#000" font-family="Liberation Serif" text-anchor="end">26</text>
<text x="444.6" y="304" font-size="17.5" font-weight="normal" fill="#000" font-family="Liberation Serif" text-anchor="end">500.000</text>
<text x="20.3" y="325.8" textLength="54" lengthAdjust="spacingAndGlyphs" font-size="17.7" font-weight="bold" fill="#000" font-family="Liberation Serif" text-anchor="start">B Total</text>
<text x="374.5" y="325.6" textLength="69.7" lengthAdjust="spacingAndGlyphs" font-size="17.5" font-weight="bold" fill="#000" font-family="Liberation Serif" text-anchor="start">2.000.000</text>
<text x="20.3" y="347.4" textLength="91.8" lengthAdjust="spacingAndGlyphs" font-size="17.7" font-weight="bold" fill="#000" font-family="Liberation Serif" text-anchor="start">Grand Total</text>
<text x="374.5" y="347.4" textLength="69.7" lengthAdjust="spacingAndGlyphs" font-size="17.5" font-weight="bold" fill="#000" font-family="Liberation Serif" text-anchor="start">2.000.000</text>
<rect x="452.6" y="242.6" width="42" height="21.8" fill="none" stroke="#3b6e50" stroke-width="1.3"/>
<rect x="492.6" y="262.4" width="3.6" height="3.6" fill="#2e5e42"/>
<rect x="758" y="120" width="12" height="262.5" fill="#dcdcdc"/>
<rect x="759" y="121" width="10" height="9.6" fill="#fff"/>
<path d="M761.6 127.2h4.8l-2.4-2.6z" fill="#666"/>
<rect x="759.3" y="130.6" width="9.4" height="69.4" fill="#fff" stroke="#c6c6c6" stroke-width="0.6"/>
<rect x="759" y="373.4" width="10" height="8.6" fill="#fff"/>
<path d="M761.6 376.4h4.8l-2.4 2.6z" fill="#666"/>
<rect x="0" y="382" width="770" height="13.2" fill="#e4e4e4"/>
<rect x="0" y="381.6" width="770" height="0.9" fill="#c6c6c6"/>
<path d="M14 386l-1.6 2.2 1.6 2.2" fill="none" stroke="#b8b8b8" stroke-width="0.8"/>
<path d="M26 386l1.6 2.2-1.6 2.2" fill="none" stroke="#b8b8b8" stroke-width="0.8"/>
<rect x="47.2" y="382.2" width="43.4" height="12.4" fill="#f7f7f7" stroke="#c8c8c8" stroke-width="0.6"/>
<rect x="47.2" y="393.6" width="43.4" height="1.1" fill="#3d7a56"/>
<text x="52.2" y="391" font-size="8" fill="#217346" font-weight="bold" font-family="Liberation Sans" textLength="33.1" lengthAdjust="spacingAndGlyphs">Lewat JT</text>
<text x="95.8" y="391" font-size="8" fill="#555" stroke="#555" stroke-width="0.14" font-weight="normal" font-family="Liberation Sans" textLength="16.2" lengthAdjust="spacingAndGlyphs">Data</text>
<rect x="117.3" y="383.4" width="0.7" height="9.4" fill="#b0b0b0"/>
<circle cx="137.5" cy="388.6" r="4.4" fill="none" stroke="#999" stroke-width="0.7"/>
<path d="M137.5 386.4v4.4M135.3 388.6h4.4" stroke="#999" stroke-width="0.8"/>
<circle cx="461" cy="385.8" r="0.45" fill="#aaa"/><circle cx="461" cy="388.4" r="0.45" fill="#aaa"/><circle cx="461" cy="391" r="0.45" fill="#aaa"/>
<rect x="468.6" y="383.8" width="9.4" height="9.4" fill="#fff"/>
<path d="M474.6 386.2v4.6l-2.6-2.3z" fill="#555"/>
<rect x="478" y="383.8" width="244.6" height="9.4" fill="#fff" stroke="#d0d0d0" stroke-width="0.6"/>
<rect x="722.6" y="383.8" width="26.4" height="9.4" fill="#dcdcdc"/>
<rect x="749" y="383.8" width="9.6" height="9.4" fill="#fff"/>
<path d="M752.6 386.2v4.6l2.6-2.3z" fill="#555"/>
<rect x="0" y="395" width="770" height="14" fill="#f1f1f1"/>
<rect x="0" y="394.8" width="770" height="0.7" fill="#d2d2d2"/>
<text x="4.2" y="404.4" font-size="7" fill="#444" stroke="#444" stroke-width="0.14" font-weight="normal" font-family="Liberation Sans" textLength="16.0" lengthAdjust="spacingAndGlyphs">Ready</text>
<rect x="592" y="395.6" width="23.3" height="13.2" fill="#d4d4d4"/>
<rect x="599.4" y="398.3" width="7.8" height="7" fill="none" stroke="#777" stroke-width="0.7"/><path d="M599.4 400.6h7.8M599.4 403h7.8M602 398.3v7M604.6 398.3v7" stroke="#777" stroke-width="0.6"/>
<rect x="623" y="398.3" width="8.2" height="7" fill="none" stroke="#888" stroke-width="0.7"/><rect x="625" y="399.8" width="4.2" height="4" fill="none" stroke="#888" stroke-width="0.6"/>
<rect x="647" y="398.3" width="8.2" height="7" fill="none" stroke="#888" stroke-width="0.7"/><path d="M647 401.6h8.2M651.1 398.3v3.3" stroke="#888" stroke-width="0.6"/>
<rect x="667" y="402.2" width="4.6" height="0.8" fill="#777"/>
<rect x="674.8" y="402.2" width="58.8" height="0.8" fill="#999"/>
<rect x="704.2" y="398.4" width="2.8" height="8" fill="#555"/>
<path d="M736.6 402.6h5M739.1 400.1v5" stroke="#777" stroke-width="0.8"/>
<text x="750" y="405" font-size="7" fill="#444" stroke="#444" stroke-width="0.14" font-weight="normal" font-family="Liberation Sans" textLength="15.6" lengthAdjust="spacingAndGlyphs">108%</text>
<rect x="0" y="408.8" width="770" height="24.2" fill="#1f1f1f"/>
<rect x="0" y="408.8" width="28.8" height="24.2" fill="#1b1a19"/>
<path d="M9.4 416.6l4 -.6v3.8h-4zM14.4 415.8l4.9-.7v4.7h-4.9zM9.4 420.6h4v3.8l-4-.6zM14.4 420.6h4.9v4.7l-4.9-.7z" fill="#fff"/>
<rect x="28.8" y="408.8" width="206.4" height="24.2" fill="#f0f0f0"/>
<circle cx="42.4" cy="419.2" r="3.2" fill="none" stroke="#333" stroke-width="0.9"/>
<path d="M40.2 421.5l-3.8 3.8" stroke="#333" stroke-width="1"/>
<text x="53" y="425" font-size="9" fill="#333" stroke="#333" stroke-width="0.14" font-weight="normal" font-family="Liberation Sans" textLength="107.0" lengthAdjust="spacingAndGlyphs">Ketik di sini untuk mencari</text>
<rect x="246" y="417.5" width="7" height="6.6" fill="none" stroke="#bbb" stroke-width="0.9"/>
<path d="M244.6 416.4h9.8M244.6 425.2h9.8M255.8 416.5v8.6" stroke="#bbb" stroke-width="0.8"/>
<defs><linearGradient id="eg" x1="0" y1="0" x2="1" y2="0.5"><stop offset="0" stop-color="#39a9e6"/><stop offset="1" stop-color="#62d65a"/></linearGradient></defs>
<circle cx="281.1" cy="420.8" r="7.4" fill="#1b74cc"/>
<path d="M274.2 422.6c.2-1 .9-4.5 4.2-5.6 3.8-1.3 7.6.2 9.2 2.8.9 1.5.9 3.2.1 4.2-1 1.2-3 1.3-4.2.6-1-.6-1.2-1.5-1.6-2.3-.5-1.1-1.7-1.8-3-1.8-2.2 0-4 1.2-4.7 2.1z" fill="url(#eg)"/>
<path d="M273.8 420A7.4 7.4 0 0 1 288 418.2c-2-2.6-6-3.4-9.2-2-2.6 1.2-4.2 2.8-5 3.8z" fill="#3cb6e3"/>
<circle cx="280.8" cy="421.8" r="2.1" fill="#0d2a4a"/>
<circle cx="311.1" cy="420.6" r="7" fill="#db4437"/>
<path d="M311.1 420.6L305 424.1A7 7 0 0 0 314.6 426.7z" fill="#0f9d58"/>
<path d="M311.1 420.6L317.2 417.1A7 7 0 0 1 314.6 426.7z" fill="#f4b400"/>
<circle cx="311.1" cy="420.6" r="3.2" fill="#fff"/><circle cx="311.1" cy="420.6" r="2.4" fill="#4285f4"/>
<rect x="338" y="413.6" width="11.8" height="10" fill="#28a8ea"/>
<rect x="333.6" y="416.6" width="7.6" height="7.6" fill="#0a64ad"/>
<ellipse cx="337.4" cy="420.4" rx="2" ry="2.5" fill="none" stroke="#fff" stroke-width="1"/>
<rect x="341.2" y="423" width="9.4" height="7" fill="#f3c58b"/><path d="M341.2 423l4.7 3.6 4.7-3.6" fill="none" stroke="#c98b48" stroke-width="0.6"/>
<path d="M364.8 416h4.6l1.2 1.4h7.4v8.6h-13.2z" fill="#f0c53a"/>
<rect x="364.8" y="418.4" width="13.2" height="7.6" fill="#ffd85e"/>
<rect x="369" y="421.2" width="5" height="3" fill="#4aa3df"/>
<rect x="397.4" y="414.4" width="11" height="12.4" rx="1" fill="#2b7cd3"/>
<rect x="397.4" y="418.4" width="11" height="4.2" fill="#185abd"/>
<rect x="394.4" y="416.8" width="7.6" height="7.6" fill="#103f91"/>
<text x="395.2" y="423" font-size="6.4" font-weight="bold" fill="#fff" font-family="Liberation Sans">W</text>
<rect x="417" y="408.8" width="28.4" height="24.2" fill="#3d3d3d"/>
<rect x="427" y="414.4" width="11" height="12.4" rx="1" fill="#21a366"/>
<rect x="427" y="418.4" width="11" height="4.2" fill="#107c41"/>
<rect x="424" y="416.8" width="7.6" height="7.6" fill="#185c37"/>
<text x="425.4" y="423" font-size="6.4" font-weight="bold" fill="#fff" font-family="Liberation Sans">x</text>
<rect x="299" y="432" width="25" height="1" fill="#9cc8ee"/>
<rect x="329.5" y="432" width="23.5" height="1" fill="#9cc8ee"/>
<rect x="359.4" y="432" width="19.400000000000034" height="1" fill="#9cc8ee"/>
<rect x="389" y="432" width="24" height="1" fill="#9cc8ee"/>
<rect x="417" y="432" width="28.399999999999977" height="1" fill="#9cc8ee"/>
<circle cx="534.8" cy="420.6" r="5.4" fill="#f6c343"/>
<path d="M533.6 425.4h7.4a2 2 0 0 0 0-4 2.6 2.6 0 0 0-5-.4 2.2 2.2 0 0 0-2.4 4.4z" fill="#e8f0f8" stroke="#7fb5e6" stroke-width="0.5"/>
<text x="547.7" y="425" font-size="8.8" fill="#fff" font-weight="normal" font-family="Liberation Sans" textLength="43.7" lengthAdjust="spacingAndGlyphs">32°C&#160; Cerah</text>
<path d="M601.8 423l3.6-4 3.6 4" fill="none" stroke="#ddd" stroke-width="0.9"/>
<rect x="617.6" y="416.4" width="5.6" height="9" rx="1.4" fill="none" stroke="#ddd" stroke-width="0.8"/><path d="M616.6 418.4v5M624.2 418.4v5" stroke="#ddd" stroke-width="0.7"/>
<rect x="631" y="418.8" width="8" height="4.8" fill="#eee"/><path d="M629.6 417.2l2 2" stroke="#eee" stroke-width="0.8"/>
<rect x="645.2" y="417.2" width="8.8" height="6" fill="none" stroke="#ddd" stroke-width="0.8"/><path d="M643.8 418v6.6M647.6 424.8h4" stroke="#ddd" stroke-width="0.8"/>
<path d="M659.4 419.2h1.6l2.4-2.4v8.4l-2.4-2.4h-1.6z" fill="none" stroke="#ddd" stroke-width="0.8"/><path d="M664.6 419.6l2.4 2.4M667 419.6l-2.4 2.4" stroke="#ddd" stroke-width="0.7"/>
<text x="674.9" y="424.8" font-size="8.6" fill="#fff" font-weight="normal" font-family="Liberation Sans" textLength="13.2" lengthAdjust="spacingAndGlyphs">ENG</text>
<text x="706.9" y="418.4" font-size="8" fill="#fff" font-weight="normal" font-family="Liberation Sans" textLength="16.4" lengthAdjust="spacingAndGlyphs">12.31</text>
<text x="696.2" y="430" font-size="8" fill="#fff" font-weight="normal" font-family="Liberation Sans" textLength="37.5" lengthAdjust="spacingAndGlyphs">26/07/2021</text>
<path d="M744.8 416.2h10.8v7.4h-6l-2.4 2v-2h-2.4z" fill="#f4f4f4"/>
<path d="M746.6 418.6h7M746.6 420.6h5" stroke="#1f1f1f" stroke-width="0.6"/>
<circle cx="754.6" cy="425.3" r="4.1" fill="#1f1f1f" stroke="#ddd" stroke-width="0.7"/>
<text x="752.6" y="428" font-size="6.4" fill="#fff" font-weight="normal" font-family="Liberation Sans" textLength="4.0" lengthAdjust="spacingAndGlyphs">6</text>
<rect x="767" y="408.8" width="0.7" height="24.2" fill="#555"/>
</svg>
</body></html>
